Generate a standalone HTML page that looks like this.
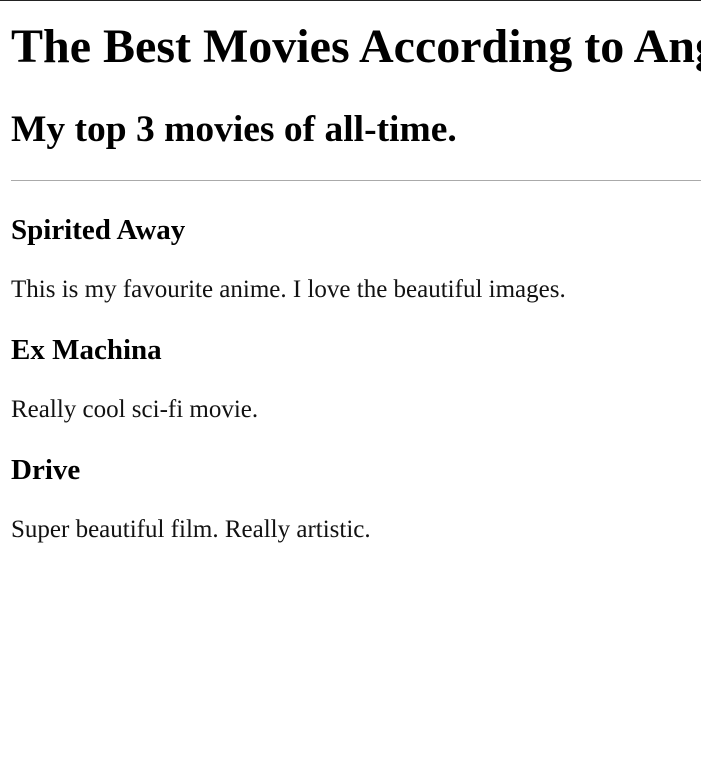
<!DOCTYPE html>
<html><head><style>
html,body{margin:0;padding:0;overflow:hidden;background:#fff}
body{font-family:"Liberation Serif",serif;color:#000;width:701px;height:772px;position:relative;overflow:hidden}
.a{position:absolute;left:11px;margin:0;white-space:nowrap;line-height:1}
h1{font-size:48px;font-weight:bold}
h2{font-size:37.5px;font-weight:bold}
h3{font-size:29px;font-weight:bold}
p{font-size:25px;color:#111}
#hr{position:absolute;left:11px;right:0;top:180px;height:1px;background:#aaa}
#top{position:absolute;top:0;left:0;width:100%;height:1px;background:#222}
</style></head><body>
<div id="top"></div>
<h1 class="a" style="top:23px">The Best Movies According to Angela</h1>
<h2 class="a" style="top:111px">My top 3 movies of all-time.</h2>
<div id="hr"></div>
<h3 class="a" style="top:216px">Spirited Away</h3>
<p class="a" style="top:277px">This is my favourite anime. I love the beautiful images.</p>
<h3 class="a" style="top:336px">Ex Machina</h3>
<p class="a" style="top:397px">Really cool sci-fi movie.</p>
<h3 class="a" style="top:456px">Drive</h3>
<p class="a" style="top:517px">Super beautiful film. Really artistic.</p>
</body></html>
